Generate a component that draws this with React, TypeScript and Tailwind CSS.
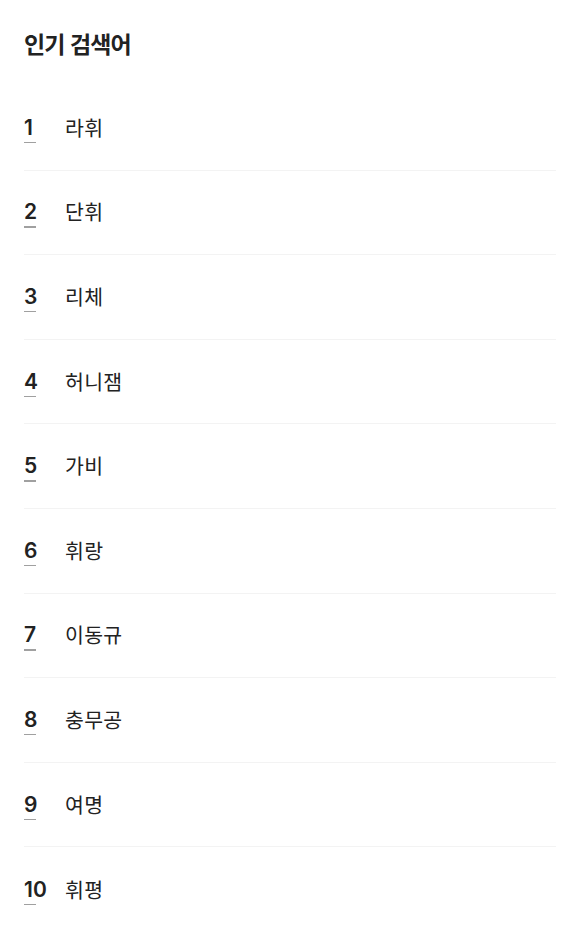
const keywords = ['라휘', '단휘', '리체', '허니잼', '가비', '휘랑', '이동규', '충무공', '여명', '휘평'];

export default function App() {
  return (
    <div
      className="min-h-screen bg-white px-6 text-[#222]"
      style={{ fontFamily: '"Noto Sans", "Noto Sans CJK KR", sans-serif' }}
    >
      <h2 className="pt-[28px] text-[23px] leading-[32px] font-semibold tracking-[-0.8px]">인기 검색어</h2>

      <ul className="mt-[26px] w-[532px]">
        {keywords.map((word, i) => (
          <li
            key={word}
            className="flex h-[84.6px] items-center border-b border-[#f3f3f3] last:border-b-0"
          >
            <div className="relative w-[41px]">
              <span className="font-['Inter',sans-serif] text-[21px] leading-[28px] font-semibold">{i + 1}</span>
              <span className="absolute left-0 top-[28px] h-[1.5px] w-[12px] bg-[#a0a0a0]" />
            </div>
            <span className="text-[20.5px] leading-[28px] tracking-[0.3px]">{word}</span>
          </li>
        ))}
      </ul>
    </div>
  );
}
